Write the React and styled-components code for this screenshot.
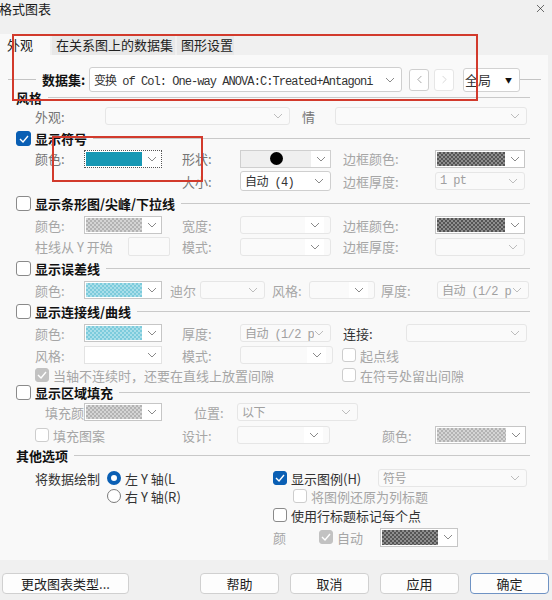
import React from 'react'
import styled, { createGlobalStyle } from 'styled-components'
import { X, ChevronLeft, ChevronRight } from 'lucide-react'

const GlobalStyle = createGlobalStyle`
  html, body { margin: 0; padding: 0; background: #f0f0f0; }
  body { font-family: "Noto Sans CJK SC", "Noto Sans", sans-serif; font-size: 13px; color: #222; }
`

const checker = (a, b) => `repeating-conic-gradient(${a} 0 25%, ${b} 0 50%) 0 0 / 4px 4px`

const fills = {
  teal: '#1798b4',
  lightTeal: checker('#7ccbdc', '#a9dee9'),
  gray: checker('#b3b3b3', '#d4d4d4'),
  dark: checker('#555555', '#8e8e8e'),
  white: '#ffffff',
}

const tones = { dark: '#333', mid: '#767676', dim: '#a6a6a6' }

const Chevron = ({ color = '#8a8a8a' }) => (
  <svg width="10" height="6" viewBox="0 0 10 6">
    <polyline points="1,1 5,5 9,1" fill="none" stroke={color} strokeWidth="1" />
  </svg>
)

const Tick = () => (
  <svg width="10" height="8" viewBox="0 0 10 8">
    <polyline points="1,4 4,7 9,1" fill="none" stroke="#fff" strokeWidth="1.4" />
  </svg>
)

const Check = ({ on, off, size }) => (
  <Box $on={on} $off={off} $s={size}>{on && <Tick />}</Box>
)

const Radio = ({ on }) => <RadioDot $on={on} />

const Combo = ({ w, h, off, children, sep, tight }) => (
  <ComboBox $w={w} $h={h} $off={off}>
    <ComboText $tight={tight}>{children}</ComboText>
    {sep ? <DropCell><Chevron /></DropCell> : <Chevron color={off ? '#bdbdbd' : '#8a8a8a'} />}
  </ComboBox>
)

const ColorCombo = ({ w = 78, h, fill, focus, off }) => (
  <ColorBox $w={w} $h={h} $focus={focus} $off={off}>
    <Swatch $fill={fills[fill]} />
    <DropCell><Chevron /></DropCell>
  </ColorBox>
)

const Head = ({ check, on, children }) => (
  <HeadRow $h={children.h}>
    {check && <Check on={on} size={15} />}
    <HeadText $check={check}>{children.t}</HeadText>
    <Rule />
  </HeadRow>
)

const App = () => {
  return (
    <Window>
      <GlobalStyle />
      <TitleBar>
        <Title>格式图表</Title>
        <Close><X size={13} strokeWidth={1.2} color="#222" /></Close>
      </TitleBar>
      <Tabs>
        <Tab $active $w={50}>外观</Tab>
        <Tab $w={123}>在关系图上的数据集</Tab>
        <Tab $w={57}>图形设置</Tab>
      </Tabs>
      <Panel>
        <DataRow>
          <ShortRule $w={28} />
          <DataLabel>数据集:</DataLabel>
          <Combo w={313} h={25} tight>变换 of Col: One-way ANOVA:C:Treated+Antagoni</Combo>
          <NavBtn $ml={7}><ChevronLeft size={13} strokeWidth={1.2} color="#777" /></NavBtn>
          <NavBtn $ml={5} $off><ChevronRight size={13} strokeWidth={1.2} color="#c4c4c4" /></NavBtn>
          <ScopeBox>全局<Tri>▼</Tri></ScopeBox>
          <ShortRule $w={21} />
        </DataRow>

        <Head>{{ t: '风格', h: 10 }}</Head>
        <Row $h={28} $x={35}>
          <Label $w={70} $tone="mid">外观:</Label>
          <Combo w={185} off />
          <Gap $w={12} />
          <Label $w={33} $tone="mid">情</Label>
          <Combo w={192} off />
        </Row>

        <Head check on>{{ t: '显示符号', h: 17 }}</Head>
        <Row $h={23} $x={35}>
          <Label $w={49} $tone="mid">颜色:</Label>
          <ColorCombo fill="teal" focus />
          <Gap $w={20} />
          <Label $w={58} $tone="mid">形状:</Label>
          <ShapeBox>
            <ShapeFace><Dot /></ShapeFace>
            <DropCell><Chevron /></DropCell>
          </ShapeBox>
          <Gap $w={12} />
          <Label $w={92} $tone="dim">边框颜色:</Label>
          <ColorCombo w={90} fill="dark" />
        </Row>
        <Row $h={22} $x={35}>
          <Gap $w={147} />
          <Label $w={58} $tone="mid">大小:</Label>
          <Combo w={91} h={20}>自动 (4)</Combo>
          <Gap $w={12} />
          <Label $w={92} $tone="dim">边框厚度:</Label>
          <Combo w={90} off>1 pt</Combo>
        </Row>

        <Head check>{{ t: '显示条形图/尖峰/下拉线', h: 22 }}</Head>
        <Row $h={22} $x={35}>
          <Label $w={49} $tone="dim">颜色:</Label>
          <ColorCombo fill="gray" />
          <Gap $w={20} />
          <Label $w={58} $tone="dim">宽度:</Label>
          <Combo w={91} off sep />
          <Gap $w={12} />
          <Label $w={92} $tone="dim">边框颜色:</Label>
          <ColorCombo w={90} fill="dark" />
        </Row>
        <Row $h={21} $x={35}>
          <Label $w={93} $tone="dim">柱线从 Y 开始</Label>
          <Field $w={42} />
          <Gap $w={12} />
          <Label $w={58} $tone="dim">模式:</Label>
          <Combo w={91} off sep />
          <Gap $w={12} />
          <Label $w={92} $tone="dim">边框厚度:</Label>
          <Combo w={90} off />
        </Row>

        <Head check>{{ t: '显示误差线', h: 22 }}</Head>
        <Row $h={22} $x={35}>
          <Label $w={49} $tone="dim">颜色:</Label>
          <ColorCombo fill="lightTeal" />
          <Gap $w={8} />
          <Label $w={30} $tone="dim">迪尔</Label>
          <Combo w={65} off />
          <Gap $w={7} />
          <Label $w={37} $tone="dim">风格:</Label>
          <Combo w={66} off sep />
          <Gap $w={6} />
          <Label $w={56} $tone="dim">厚度:</Label>
          <Combo w={92} off>自动 (1/2 p</Combo>
        </Row>

        <Head check>{{ t: '显示连接线/曲线', h: 20 }}</Head>
        <Row $h={24} $x={35}>
          <Label $w={49} $tone="dim">颜色:</Label>
          <ColorCombo fill="lightTeal" />
          <Gap $w={20} />
          <Label $w={58} $tone="dim">厚度:</Label>
          <Combo w={91} off>自动 (1/2 p</Combo>
          <Gap $w={12} />
          <Label $w={63} $tone="dark">连接:</Label>
          <Combo w={121} off />
        </Row>
        <Row $h={20} $x={35}>
          <Label $w={49} $tone="dim">风格:</Label>
          <ColorCombo fill="white" off />
          <Gap $w={20} />
          <Label $w={58} $tone="dim">模式:</Label>
          <Combo w={93} off sep />
          <Gap $w={9} />
          <Opt><Check off /><OptText $tone="dim">起点线</OptText></Opt>
        </Row>
        <Row $h={20} $x={35}>
          <Opt $w={307}><Check on off /><OptText $tone="dim">当轴不连续时，还要在直线上放置间隙</OptText></Opt>
          <Opt><Check off /><OptText $tone="dim">在符号处留出间隙</OptText></Opt>
        </Row>

        <Head check>{{ t: '显示区域填充', h: 14 }}</Head>
        <Row $h={26} $x={45}>
          <Label $w={39} $tone="dim">填充颜</Label>
          <ColorCombo fill="gray" />
          <Gap $w={32} />
          <Label $w={43} $tone="dim">位置:</Label>
          <Combo w={121} off>以下</Combo>
        </Row>
        <Row $h={20} $x={35}>
          <Opt $w={147}><Check off /><OptText $tone="dim">填充图案</OptText></Opt>
          <Label $w={55} $tone="dim">设计:</Label>
          <Combo w={93} off sep />
          <Gap $w={52} />
          <Label $w={53} $tone="dim">颜色:</Label>
          <ColorCombo w={91} fill="gray" />
        </Row>

        <Head>{{ t: '其他选项', h: 20 }}</Head>
        <Row $h={26} $x={35}>
          <Label $w={72} $tone="dark">将数据绘制</Label>
          <Opt $w={166}><Radio on /><OptText $tone="dark">左 Y 轴(L</OptText></Opt>
          <Opt $w={105}><Check on /><OptText $tone="dark">显示图例(H)</OptText></Opt>
          <Combo w={149} off>符号</Combo>
        </Row>
        <Row $h={10} $x={107}>
          <Opt $w={186}><Radio /><OptText $tone="dark">右 Y 轴(R)</OptText></Opt>
          <Opt><Check off /><OptText $tone="dim">将图例还原为列标题</OptText></Opt>
        </Row>
        <Row $h={28} $x={273}>
          <Opt><Check /><OptText $tone="dark">使用行标题标记每个点</OptText></Opt>
        </Row>
        <Row $h={16} $x={273}>
          <Label $w={46} $tone="dim">颜</Label>
          <Opt $w={61}><Check on off /><OptText $tone="dim">自动</OptText></Opt>
          <ColorCombo fill="dark" h={19} />
        </Row>
      </Panel>
      <Footer>
        <Button $w={127}>更改图表类型...</Button>
        <Spacer />
        <Button $w={79}>帮助</Button>
        <Button $w={79}>取消</Button>
        <Button $w={79}>应用</Button>
        <Button $w={79} $primary>确定</Button>
      </Footer>
      <Mark $x={12} $y={34} $w={466} $h={67} />
      <Mark $x={52} $y={136} $w={151} $h={46} />
    </Window>
  )
}

export default App

const Window = styled.div`
  position: relative;
  width: 552px;
  height: 600px;
  overflow: hidden;
  background: #f0f0f0;
  display: flex;
  flex-direction: column;
`

const TitleBar = styled.div`
  height: 34px;
  display: flex;
  justify-content: space-between;
  align-items: flex-start;
`

const Title = styled.div`
  font-size: 13px;
  line-height: 18px;
  color: #1a1a1a;
  margin-left: -1px;
`

const Close = styled.div`
  padding: 2px 5px 0 0;
  display: flex;
`

const Tabs = styled.div`
  height: 21px;
  display: flex;
  gap: 2px;
  align-items: stretch;
`

const Tab = styled.div`
  box-sizing: border-box;
  width: ${p => p.$w}px;
  padding-left: ${p => (p.$active ? 7 : 4)}px;
  display: flex;
  align-items: center;
  background: ${p => (p.$active ? '#f9f9f9' : '#e8e8e8')};
  color: #222;
  white-space: nowrap;
`

const Panel = styled.div`
  width: 548px;
  height: 505px;
  box-sizing: border-box;
  padding-top: 12px;
  background: #f9f9f9;
  display: flex;
  flex-direction: column;
`

const DataRow = styled.div`
  height: 25px;
  display: flex;
  align-items: center;
  padding-left: 8px;
`

const ShortRule = styled.div`
  width: ${p => p.$w}px;
  height: 1px;
  background: #c4c4c4;
  flex-shrink: 0;
`

const DataLabel = styled.span`
  width: 47px;
  margin-left: 6px;
  font-weight: bold;
  color: #111;
  white-space: nowrap;
  flex-shrink: 0;
`

const NavBtn = styled.div`
  box-sizing: border-box;
  width: 20px;
  height: 22px;
  margin-left: ${p => p.$ml}px;
  border: 1px solid ${p => (p.$off ? '#e6e6e6' : '#cfcfcf')};
  border-radius: 3px;
  background: #fff;
  display: flex;
  align-items: center;
  justify-content: center;
  flex-shrink: 0;
`

const ScopeBox = styled.div`
  box-sizing: border-box;
  width: 57px;
  height: 24px;
  margin-left: 9px;
  border: 1px solid #d2d2d2;
  border-radius: 3px;
  background: #fff;
  display: flex;
  align-items: center;
  justify-content: space-between;
  padding: 0 7px 0 1px;
  color: #333;
  flex-shrink: 0;
`

const Tri = styled.span`
  font-size: 7px;
  color: #111;
`

const HeadRow = styled.div`
  height: ${p => p.$h}px;
  display: flex;
  align-items: center;
  padding: 0 18px 0 16px;
`

const HeadText = styled.span`
  margin-left: ${p => (p.$check ? 4 : 0)}px;
  font-weight: bold;
  color: #111;
  white-space: nowrap;
`

const Rule = styled.div`
  flex: 1;
  height: 1px;
  margin-left: 6px;
  background: #c9c9c9;
`

const Row = styled.div`
  height: ${p => p.$h}px;
  display: flex;
  align-items: center;
  padding-left: ${p => p.$x}px;
`

const Label = styled.span`
  width: ${p => p.$w}px;
  flex-shrink: 0;
  color: ${p => tones[p.$tone]};
  white-space: nowrap;
`

const Gap = styled.span`
  width: ${p => p.$w}px;
  flex-shrink: 0;
`

const ComboBox = styled.div`
  box-sizing: border-box;
  width: ${p => p.$w}px;
  height: ${p => p.$h || 18}px;
  flex-shrink: 0;
  display: flex;
  align-items: center;
  padding-left: 4px;
  padding-right: 6px;
  border: 1px solid ${p => (p.$off ? '#e6e6e6' : '#cfcfcf')};
  border-radius: 3px;
  background: ${p => (p.$off ? '#fafafa' : '#fff')};
  color: ${p => (p.$off ? '#a0a0a0' : '#333')};
`

const ComboText = styled.span`
  flex: 1;
  overflow: hidden;
  white-space: nowrap;
  font-family: "Liberation Mono", "Noto Sans CJK SC", monospace;
  font-size: 12px;
  letter-spacing: ${p => (p.$tight ? -0.95 : -0.6)}px;
`

const DropCell = styled.div`
  width: 19px;
  align-self: stretch;
  display: flex;
  align-items: center;
  justify-content: center;
  background: #fff;
  flex-shrink: 0;
`

const ColorBox = styled.div`
  box-sizing: border-box;
  width: ${p => p.$w}px;
  height: ${p => p.$h || 18}px;
  flex-shrink: 0;
  display: flex;
  border: 1px ${p => (p.$focus ? 'dotted #555' : `solid ${p.$off ? '#e3e3e3' : '#c6c6c6'}`)};
  background: #fff;
`

const Swatch = styled.div`
  flex: 1;
  margin: 1px 0 1px 1px;
  background: ${p => p.$fill};
`

const ShapeBox = styled.div`
  box-sizing: border-box;
  width: 91px;
  height: 18px;
  flex-shrink: 0;
  display: flex;
  border: 1px solid #cfcfcf;
  background: #fff;
`

const ShapeFace = styled.div`
  flex: 1;
  background: #efefef;
  display: flex;
  align-items: center;
  justify-content: center;
`

const Dot = styled.span`
  width: 13px;
  height: 13px;
  border-radius: 50%;
  background: #000;
`

const Field = styled.div`
  box-sizing: border-box;
  width: ${p => p.$w}px;
  height: 19px;
  flex-shrink: 0;
  border: 1px solid #e6e6e6;
  border-radius: 2px;
  background: #fafafa;
`

const Box = styled.span`
  box-sizing: border-box;
  width: ${p => p.$s || 14}px;
  height: ${p => p.$s || 14}px;
  flex-shrink: 0;
  border-radius: 3px;
  display: inline-flex;
  align-items: center;
  justify-content: center;
  border: 1px solid ${p => (p.$on ? (p.$off ? '#c2c2c2' : '#0a5fb4') : p.$off ? '#cdcdcd' : '#8a8a8a')};
  background: ${p => (p.$on ? (p.$off ? '#c2c2c2' : '#0a5fb4') : '#fff')};
`

const RadioDot = styled.span`
  box-sizing: border-box;
  width: 14px;
  height: 14px;
  flex-shrink: 0;
  border-radius: 50%;
  border: ${p => (p.$on ? '4px solid #0a5fb4' : '1px solid #7a7a7a')};
  background: #fff;
`

const Opt = styled.label`
  display: flex;
  align-items: center;
  width: ${p => (p.$w ? `${p.$w}px` : 'auto')};
  flex-shrink: 0;
`

const OptText = styled.span`
  margin-left: 4px;
  color: ${p => tones[p.$tone]};
  white-space: nowrap;
`

const Footer = styled.div`
  display: flex;
  align-items: center;
  gap: 11px;
  padding: 13px 3px 0 2px;
`

const Spacer = styled.div`
  flex: 1;
`

const Button = styled.button`
  box-sizing: border-box;
  width: ${p => p.$w}px;
  height: 21px;
  padding: 0;
  border: 1px solid ${p => (p.$primary ? '#6f93c4' : '#d0d0d0')};
  border-radius: 4px;
  background: #fdfdfd;
  font-family: "Noto Sans CJK SC", sans-serif;
  font-size: 13px;
  color: #222;
`

const Mark = styled.div`
  position: absolute;
  left: ${p => p.$x}px;
  top: ${p => p.$y}px;
  width: ${p => p.$w}px;
  height: ${p => p.$h}px;
  box-sizing: border-box;
  border: 2px solid #d23a2c;
  pointer-events: none;
`
